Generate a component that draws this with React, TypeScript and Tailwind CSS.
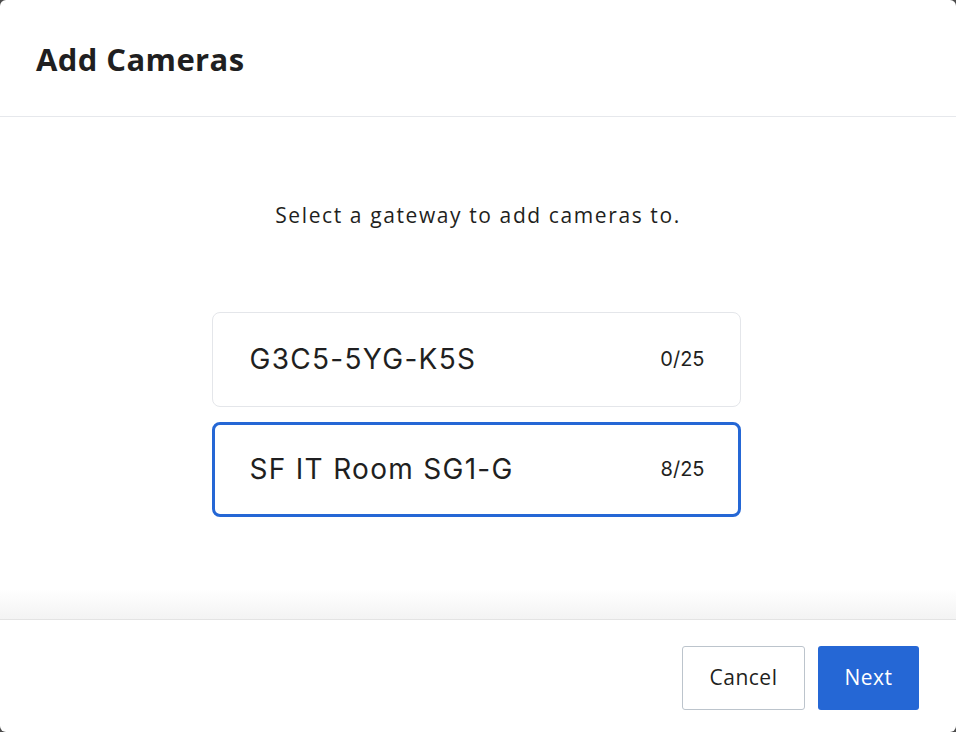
export default function App() {
  const gateways = [
    { name: 'G3C5-5YG-K5S', count: '0/25', selected: false },
    { name: 'SF IT Room SG1-G', count: '8/25', selected: true },
  ];

  return (
    <div className="h-[732px] w-[956px] bg-[#4b4b4b]">
      <div className="flex h-full flex-col overflow-hidden rounded-[6px] bg-white text-[#1f1f21]">
        <div className="flex h-[117px] shrink-0 items-center border-b border-[#e6e8ec] px-9">
          <h1 className="pt-[3px] text-[31px] font-bold tracking-[0.4px] [font-family:'Open_Sans',sans-serif]">
            Add Cameras
          </h1>
        </div>

        <div className="relative flex flex-1 flex-col items-center">
          <p className="mt-[83px] text-[21px] tracking-[1.6px] [font-family:'Open_Sans',sans-serif]">
            Select a gateway to add cameras to.
          </p>

          <div className="mt-[80px] flex w-[529px] -translate-x-[2px] flex-col gap-[15px] [font-family:Inter,sans-serif]">
            {gateways.map((g) => (
              <button
                key={g.name}
                className={
                  g.selected
                    ? 'flex h-[95px] items-center justify-between rounded-[8px] border-[3px] border-[#2567d5] bg-white pl-[35px] pr-[33px] text-left'
                    : 'flex h-[95px] items-center justify-between rounded-[8px] border border-[#e4e6ea] bg-white pl-[37px] pr-[35px] text-left'
                }
              >
                <span className="text-[28px] tracking-[1.3px]">{g.name}</span>
                <span className="text-[20px]">{g.count}</span>
              </button>
            ))}
          </div>

          <div className="absolute bottom-0 left-0 right-0 h-[30px] bg-gradient-to-b from-white to-[#f3f3f3]" />
        </div>

        <div className="flex h-[113px] shrink-0 items-start justify-end gap-[13px] border-t border-[#e3e3e3] pr-[37px] pt-[26px] [font-family:'Open_Sans',sans-serif]">
          <button className="h-[64px] w-[123px] rounded-[3px] border border-[#bcc4cc] bg-white text-[21px] tracking-[0.5px] text-[#1f1f21]">
            Cancel
          </button>
          <button className="h-[64px] w-[101px] rounded-[3px] bg-[#2567d5] text-[21px] tracking-[0.5px] text-white">
            Next
          </button>
        </div>
      </div>
    </div>
  );
}
